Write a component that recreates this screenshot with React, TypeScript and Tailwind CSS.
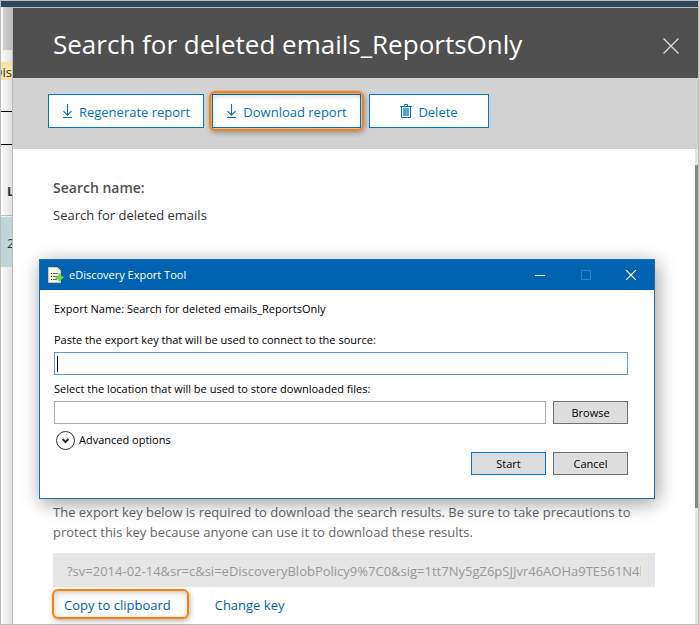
import { ReactNode, useState } from "react";

const EXPORT_KEY =
  "?sv=2014-02-14&sr=c&si=eDiscoveryBlobPolicy9%7C0&sig=1tt7Ny5gZ6pSJJvr46AOHa9TE561N4kQx0";

function DownloadIcon() {
  return (
    <svg width="11" height="15" viewBox="0 0 11 15" fill="none" stroke="currentColor">
      <path d="M5.5 0V11M1.5 7.2L5.5 11.2L9.5 7.2" strokeWidth="1.1" />
      <path d="M1 13.5H10" />
    </svg>
  );
}

function TrashIcon() {
  return (
    <svg width="12" height="15" viewBox="0 0 12 15" fill="none" stroke="currentColor">
      <path d="M0 2.5H12M4.5 2.5V0.5H7.5V2.5" />
      <path d="M1.5 2.5V13.5H10.5V2.5" />
      <path d="M4 4V12M6 4V12M8 4V12" strokeWidth="1.3" />
    </svg>
  );
}

function ExportIcon() {
  return (
    <svg width="16" height="16" viewBox="0 0 16 16">
      <path d="M0.5 0.5H9.5L12.5 3.5V15.5H0.5Z" fill="#f8f4e4" stroke="#d3c8aa" />
      <path d="M9.5 0.5V3.5H12.5Z" fill="#ddd0ad" />
      <path d="M3 6.5H4M3 9.5H4M3 12.5H4" stroke="#333333" />
      <path d="M5 6.5H10M5 9.5H8M5 12.5H9" stroke="#66666f" />
      <path d="M8 9H11V6.8L15.7 10.5L11 14.2V12H8Z" fill="#6fdc3c" stroke="#4cb428" strokeWidth="0.6" />
    </svg>
  );
}

// Orange frame that draws attention to a button
function Highlight({ className }: { className: string }) {
  return (
    <span
      className={
        "pointer-events-none absolute rounded-md border-2 border-[#ff8000] shadow-[1px_2px_5px_rgba(0,0,0,0.3),inset_1px_2px_6px_rgba(0,0,0,0.2)] " +
        className
      }
    />
  );
}

interface ToolbarButtonProps {
  className: string;
  icon: ReactNode;
  label: string;
  highlighted?: boolean;
}

function ToolbarButton({ className, icon, label, highlighted }: ToolbarButtonProps) {
  return (
    <button
      className={
        "relative flex h-[34px] items-center justify-center gap-1.5 border border-[#0078d7] bg-white text-[13px] text-[#0072c6] " +
        className
      }
    >
      {icon}
      <span className="pt-1">{label}</span>
      {highlighted && <Highlight className="-inset-1" />}
    </button>
  );
}

// The part of the page behind that stays visible beside the panel
function PageBehind() {
  return (
    <div className="w-[11px] shrink-0 overflow-hidden bg-linear-to-r from-[#fafafa] to-[#e2e2e2] text-[13px] text-[#333333]">
      <div className="ml-0.5 h-[43px] bg-linear-to-r from-[#d0d0d0] to-[#bcbcbc]" />
      <div className="mt-3 flex h-[18px] items-center justify-end bg-[#f3e5a5] pt-1 whitespace-nowrap">
        Dis
      </div>
      <div className="mt-[31px] border-t border-black" />
      <div className="mt-8 border-t border-black" />
      <div className="flex h-[70px] items-end pb-3.5 pl-1.5 font-bold">L</div>
      <div className="border-t border-[#bbbbbb]" />
      <div className="mt-px flex h-[50px] items-center bg-[#c0d3d6] pt-1 pl-1.5">2</div>
    </div>
  );
}

function ExportDialog() {
  const [exportKey, setExportKey] = useState("");
  const [location, setLocation] = useState("");
  const button = "h-[23px] w-[75px] border bg-[#dddddd]";

  return (
    <div
      role="dialog"
      aria-labelledby="dialog-title"
      className="absolute top-[251px] right-[43px] left-[26px] h-60 border border-[#1a6fb5] bg-white text-[11px] leading-4 text-black shadow-[2px_4px_18px_rgba(0,0,0,0.4)]"
    >
      <div className="flex h-[30px] items-center bg-[#0063b1] pl-2 text-white">
        <ExportIcon />
        <h2 id="dialog-title" className="ml-[5px] grow">
          eDiscovery Export Tool
        </h2>
        <button aria-label="Minimize" className="flex h-full w-[46px] items-center justify-center">
          <svg width="10" height="10" stroke="currentColor">
            <path d="M0 5.5H10" />
          </svg>
        </button>
        <button
          aria-label="Maximize"
          disabled
          className="flex h-full w-[45px] items-center justify-center text-[#3484c4]"
        >
          <svg width="10" height="10" fill="none" stroke="currentColor">
            <path d="M0.5 0.5H9.5V9.5H0.5Z" />
          </svg>
        </button>
        <button aria-label="Close" className="flex h-full w-[46px] items-center justify-center">
          <svg width="10" height="10" stroke="currentColor" strokeWidth="1.2">
            <path d="M0 0L10 10M10 0L0 10" />
          </svg>
        </button>
      </div>
      <div className="pr-[26px] pl-3.5">
        <p className="pt-[11px]">Export Name: Search for deleted emails_ReportsOnly</p>
        <label htmlFor="export-key" className="mt-[15px] block">
          Paste the export key that will be used to connect to the source:
        </label>
        <div className="relative mt-1">
          <input
            id="export-key"
            value={exportKey}
            onChange={(event) => setExportKey(event.target.value)}
            className="block h-[23px] w-full border border-[#569de5] px-1 outline-none"
          />
          <span className="absolute top-1 left-[3px] h-4 w-px bg-black" />
        </div>
        <label htmlFor="location" className="mt-1.5 block">
          Select the location that will be used to store downloaded files:
        </label>
        <div className="mt-1 flex gap-[7px]">
          <input
            id="location"
            value={location}
            onChange={(event) => setLocation(event.target.value)}
            className="h-[23px] min-w-0 grow border border-[#ababab] px-1"
          />
          <button className={button + " border-[#707070]"}>Browse</button>
        </div>
        <button className="mt-1.5 ml-0.5 flex items-center gap-[3px]">
          <svg width="20" height="20" fill="none" stroke="#333333">
            <circle cx="9.5" cy="10.5" r="9" fill="white" />
            <path d="M6.5 9L9.5 12L12.5 9" strokeWidth="2" />
          </svg>
          Advanced options
        </button>
        <div className="mt-0.5 flex justify-end gap-[7px]">
          <button className={button + " border-[#0078d7]"}>Start</button>
          <button className={button + " border-[#707070]"}>Cancel</button>
        </div>
      </div>
    </div>
  );
}

export default function App() {
  return (
    <div className="flex min-h-screen flex-col border border-[#bbbbbb] bg-white font-['Open_Sans','Noto_Sans',sans-serif]">
      <div className="h-1.5 bg-[#2f475b]" />
      <div className="flex grow">
        <PageBehind />
        <main className="relative flex min-w-0 grow flex-col border-t border-l border-[#bbbbbb]">
          <header className="flex h-[70px] items-center justify-between bg-[#505050] pr-[19px] pl-10 text-white">
            <h1 className="pt-0.5 text-[26px]">Search for deleted emails_ReportsOnly</h1>
            <button aria-label="Close panel" className="mt-1.5 text-[#dddddd]">
              <svg width="16" height="16" stroke="currentColor" strokeWidth="1.3">
                <path d="M0.5 0.5L15.5 15.5M15.5 0.5L0.5 15.5" />
              </svg>
            </button>
          </header>
          <div className="flex h-[71px] gap-2 bg-[#d2d2d2] pt-4 pl-[35px]">
            <ToolbarButton className="w-[156px]" icon={<DownloadIcon />} label="Regenerate report" />
            <ToolbarButton
              className="w-[149px]"
              icon={<DownloadIcon />}
              label="Download report"
              highlighted
            />
            <ToolbarButton className="w-[120px]" icon={<TrashIcon />} label="Delete" />
          </div>
          <div className="flex grow">
            <div className="min-w-0 grow pr-10 pb-1 pl-10 text-[13px] leading-5">
              <h2 className="pt-[29px] text-sm leading-5 font-semibold text-[#505050]">
                Search name:
              </h2>
              <p className="mt-[7px] text-[#333333]">Search for deleted emails</p>
              <p className="mt-[277px] text-[#666666]">
                The export key below is required to download the search results. Be sure to take
                precautions to protect this key because anyone can use it to download these results.
              </p>
              <input
                readOnly
                aria-label="Export key"
                value={EXPORT_KEY}
                className="mt-[11px] block h-[34px] w-full bg-[#e5e5e5] px-3.5 pt-0.5 text-[#999999]"
              />
              <div className="mt-2 flex gap-11 pl-[11px] text-[#0062b1]">
                <button className="relative">
                  Copy to clipboard
                  <Highlight className="-top-1.5 -right-[18px] -bottom-1 -left-3" />
                </button>
                <button>Change key</button>
              </div>
            </div>
            <div className="w-[3px] shrink-0 bg-[#e5e5e5] pt-4">
              <div className="h-[343px] bg-[#888888]" />
            </div>
          </div>
          <ExportDialog />
        </main>
      </div>
    </div>
  );
}
